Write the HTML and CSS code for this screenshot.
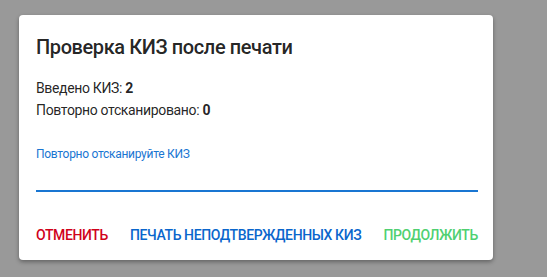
FILE: index.html
```html
<!DOCTYPE html>
<html>
    <head>
        <meta charset="UTF-8">
        <title>Проверка КИЗ</title>
        <link rel="stylesheet" href="styles.css">
    </head>
    <body>
        <div class="dialog">
            <h2 class="title">Проверка КИЗ после печати</h2>
            <div class="content">
                <p class="line">Введено КИЗ: <b>2</b></p>
                <p class="line">Повторно отсканировано: <b>0</b></p>
                <div class="field">
                    <label class="label">Повторно отсканируйте КИЗ</label>
                    <input class="input" type="text">
                </div>
            </div>
            <div class="actions">
                <button class="btn cancel">Отменить</button>
                <button class="btn print">Печать неподтвержденных КИЗ</button>
                <button class="btn next">Продолжить</button>
            </div>
        </div>
    </body>
</html>
```

FILE: styles.css
```css
*{
    margin: 0;
    padding: 0;
    box-sizing: border-box;
}
html,body{
    width: 100%;
    height: 100%;
}
body{
    background: #999;
    font-family: Roboto, "Noto Sans", sans-serif;
    color: rgba(0,0,0,0.87);
    padding: 15px 0 0 19px;
}
.dialog{
    width: 474px;
    height: 245px;
    background: #fff;
    border-radius: 4px;
    box-shadow: 0 2px 4px rgba(0,0,0,0.35);
    padding: 0 15px 0 17px;
}
.title{
    padding-top: 16px;
    font-size: 20px;
    line-height: 32px;
    font-weight: 500;
    letter-spacing: -0.4px;
}
.content{
    padding-top: 14px;
}
.line{
    font-size: 14px;
    line-height: 22px;
    letter-spacing: -0.35px;
}
.line b{
    font-weight: 700;
}
.field{
    margin-top: 25px;
}
.label{
    display: block;
    font-size: 12px;
    line-height: 16px;
    letter-spacing: -0.28px;
    color: #1976d2;
}
.input{
    display: block;
    width: 100%;
    height: 30px;
    border: 0;
    border-bottom: 2px solid #1976d2;
    outline: none;
    font: inherit;
    font-size: 16px;
}
.actions{
    margin-top: 25px;
    display: flex;
    justify-content: space-between;
}
.btn{
    background: none;
    border: 0;
    font-family: Roboto, "Noto Sans", sans-serif;
    font-size: 14px;
    font-weight: 500;
    line-height: 36px;
    text-transform: uppercase;
    letter-spacing: -0.4px;
}
.cancel{
    color: #d0021b;
}
.print{
    color: #0a66cc;
}
.next{
    color: #4fd071;
}
```
